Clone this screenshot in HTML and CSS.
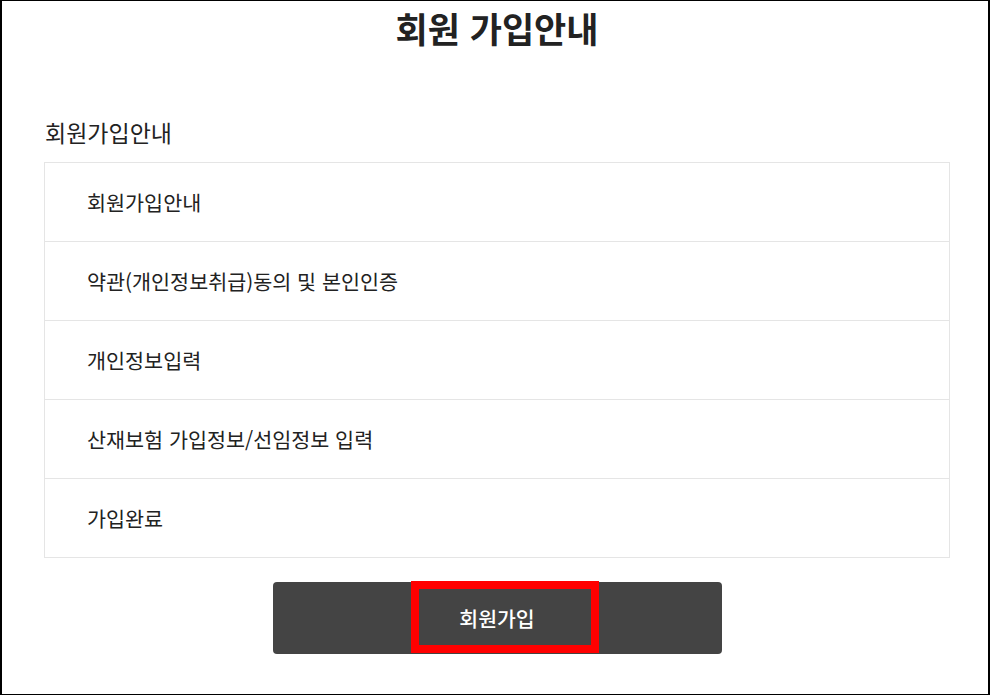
FILE: index.html
```
<!DOCTYPE html>
<html lang="ko">
<head>
  <meta charset="UTF-8">
  <meta name="viewport" content="width=device-width, initial-scale=1.0">
  <title>회원 가입안내</title>
  <link rel="stylesheet" href="styles.css">
</head>
<body>
  <div class="page">
    <h2 class="page-title">회원 가입안내</h2>
    <div class="guide">
      <h3 class="guide-title">회원가입안내</h3>
      <ul class="step-list">
        <li class="step">회원가입안내</li>
        <li class="step">약관(개인정보취급)동의 및 본인인증</li>
        <li class="step">개인정보입력</li>
        <li class="step">산재보험 가입정보/선임정보 입력</li>
        <li class="step">가입완료</li>
      </ul>
      <div class="btn-area">
        <a class="btn-join" href="#">
          <span class="btn-mark"></span>
          회원가입
        </a>
      </div>
    </div>
  </div>
</body>
</html>
```

FILE: styles.css
```
* {
  box-sizing: border-box;
}
html, body {
  margin: 0;
  padding: 0;
  background: #fff;
}
body {
  font-family: "Noto Sans CJK KR", "Noto Sans", sans-serif;
  color: #222;
}
.page {
  width: 990px;
  height: 695px;
  border-style: solid;
  border-color: #000;
  border-width: 1px 2px 1px 2px;
  padding: 0 38px 0 42px;
  overflow: hidden;
}
.page-title {
  margin: 0;
  padding-top: 1px;
  font-size: 35px;
  line-height: 51px;
  font-weight: 700;
  text-align: center;
  color: #222;
}
.guide-title {
  margin: 58px 0 0 1px;
  height: 51px;
  font-size: 23px;
  font-weight: 400;
  line-height: 42px;
  color: #222;
}
.step-list {
  margin: 0;
  padding: 0;
  list-style: none;
  border: 1px solid #e5e5e5;
}
.step {
  display: flex;
  align-items: center;
  height: 79px;
  padding-left: 42px;
  font-size: 20.7px;
  color: #222;
  border-top: 1px solid #e5e5e5;
}
.step:first-child {
  height: 78px;
  border-top: none;
}
.btn-area {
  display: flex;
  justify-content: center;
  margin-top: 24px;
}
.btn-join {
  position: relative;
  display: flex;
  align-items: center;
  justify-content: center;
  width: 449px;
  height: 72px;
  background: #444;
  border-radius: 4px;
  color: #fff;
  font-size: 20.5px;
  font-weight: 500;
  text-decoration: none;
}
.btn-mark {
  position: absolute;
  left: 138px;
  top: -1px;
  width: 188px;
  height: 72px;
  border: 8px solid #f00;
}
```
